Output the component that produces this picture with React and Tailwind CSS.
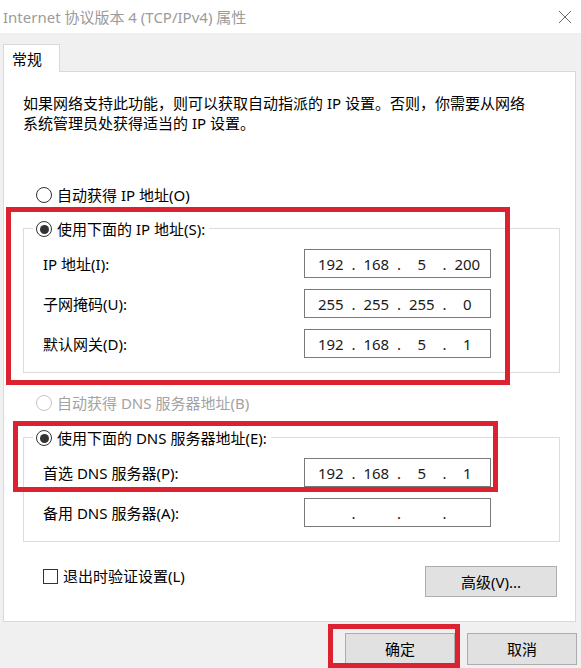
import React from "react";

const FONT = "font-['Noto_Sans','Noto_Sans_CJK_SC',sans-serif]";

function Radio({ checked, disabled }) {
  return (
    <span
      className={
        "w-[16px] h-[16px] rounded-full border bg-white flex items-center justify-center shrink-0 " +
        (disabled ? "border-[#c4c4c4]" : "border-[#333333]")
      }
    >
      {checked && <span className="w-[9px] h-[9px] rounded-full bg-[#333333]" />}
    </span>
  );
}

function IpBox({ parts }) {
  return (
    <div className="w-[187px] h-[29px] border border-[#7a7a7a] bg-white flex items-center pl-[3px] text-[15px] leading-[20px] text-[#1a1a1a]">
      {parts.map((p, i) => (
        <React.Fragment key={i}>
          {i > 0 && <span className="w-0 flex justify-center">.</span>}
          <span className="flex-1 text-center">{p}</span>
        </React.Fragment>
      ))}
    </div>
  );
}

function Field({ label, parts }) {
  return (
    <div className="flex items-center">
      <span className="w-[280px] pl-[19px]">{label}</span>
      <IpBox parts={parts} />
    </div>
  );
}

function Group({ legend, children }) {
  return (
    <div className="ml-[19px] w-[537px] border border-[#dcdcdc] pb-[14px]">
      <div className="-mt-[10px] ml-[9px] w-fit bg-white pl-[3px] pr-[4px] h-[20px] flex items-center gap-[5px]">
        <Radio checked />
        <span>{legend}</span>
      </div>
      <div className="mt-[10px] flex flex-col gap-[11px]">{children}</div>
    </div>
  );
}

export default function App() {
  return (
    <div className={"relative w-[581px] h-[668px] overflow-hidden bg-[#f0f0f0] text-[15px] leading-[20px] text-black " + FONT}>
      {/* title bar */}
      <div className="h-[33px] bg-white flex items-center justify-between pl-[3px] pr-[9px]">
        <span className="text-[#9b9b9b] text-[15px]">Internet 协议版本 4 (TCP/IPv4) 属性</span>
        <svg width="14" height="14" viewBox="0 0 14 14" className="text-[#6b6b6b]">
          <path d="M1 1 L13 13 M13 1 L1 13" stroke="currentColor" strokeWidth="1" fill="none" />
        </svg>
      </div>

      {/* tab */}
      <div className="pt-[11px] pl-[3px]">
        <div className="relative z-10 -mb-px w-[57px] h-[28px] bg-white border border-b-0 border-[#d9d9d9] flex items-center pl-[8px]">
          常规
        </div>
      </div>

      {/* pane */}
      <div className="ml-[3px] w-[573px] h-[551px] bg-white border border-[#d9d9d9]">
        <p className="pt-[21px] pl-[19px]">
          如果网络支持此功能，则可以获取自动指派的 IP 设置。否则，你需要从网络
          <br />
          系统管理员处获得适当的 IP 设置。
        </p>

        <div className="mt-[52px] pl-[32px] flex items-center gap-[5px] h-[20px]">
          <Radio />
          <span>自动获得 IP 地址(O)</span>
        </div>

        <div className="mt-[23px]">
          <Group legend="使用下面的 IP 地址(S):">
            <Field label="IP 地址(I):" parts={["192", "168", "5", "200"]} />
            <Field label="子网掩码(U):" parts={["255", "255", "255", "0"]} />
            <Field label="默认网关(D):" parts={["192", "168", "5", "1"]} />
          </Group>
        </div>

        <div className="mt-[20px] pl-[32px] flex items-center gap-[5px] h-[20px] text-[#a3a3a3]">
          <Radio disabled />
          <span>自动获得 DNS 服务器地址(B)</span>
        </div>

        <div className="mt-[24px]">
          <Group legend="使用下面的 DNS 服务器地址(E):">
            <Field label="首选 DNS 服务器(P):" parts={["192", "168", "5", "1"]} />
            <Field label="备用 DNS 服务器(A):" parts={["", "", "", ""]} />
          </Group>
        </div>

        <div className="mt-[24px] flex items-start justify-between pr-[18px]">
          <div className="pl-[39px] flex items-center gap-[5px] h-[20px]">
            <span className="w-[15px] h-[15px] border border-[#333333] bg-white" />
            <span>退出时验证设置(L)</span>
          </div>
          <button className="w-[132px] h-[31px] bg-[#e1e1e1] border border-[#adadad]">高级(V)...</button>
        </div>
      </div>

      {/* footer buttons */}
      <div className="flex justify-end gap-[12px] pt-[11px] pr-[4px]">
        <button className="w-[110px] h-[32px] bg-[#e1e1e1] border border-[#adadad]">确定</button>
        <button className="w-[110px] h-[32px] bg-[#e1e1e1] border border-[#adadad]">取消</button>
      </div>

      {/* red annotation boxes */}
      <div className="absolute left-[6px] top-[207px] w-[504px] h-[178px] border-[5px] border-[#dc2230]" />
      <div className="absolute left-[13px] top-[421px] w-[485px] h-[71px] border-[5px] border-[#dc2230]" />
      <div className="absolute left-[328px] top-[624px] w-[132px] h-[44px] border-[5px] border-[#dc2230]" />
    </div>
  );
}
